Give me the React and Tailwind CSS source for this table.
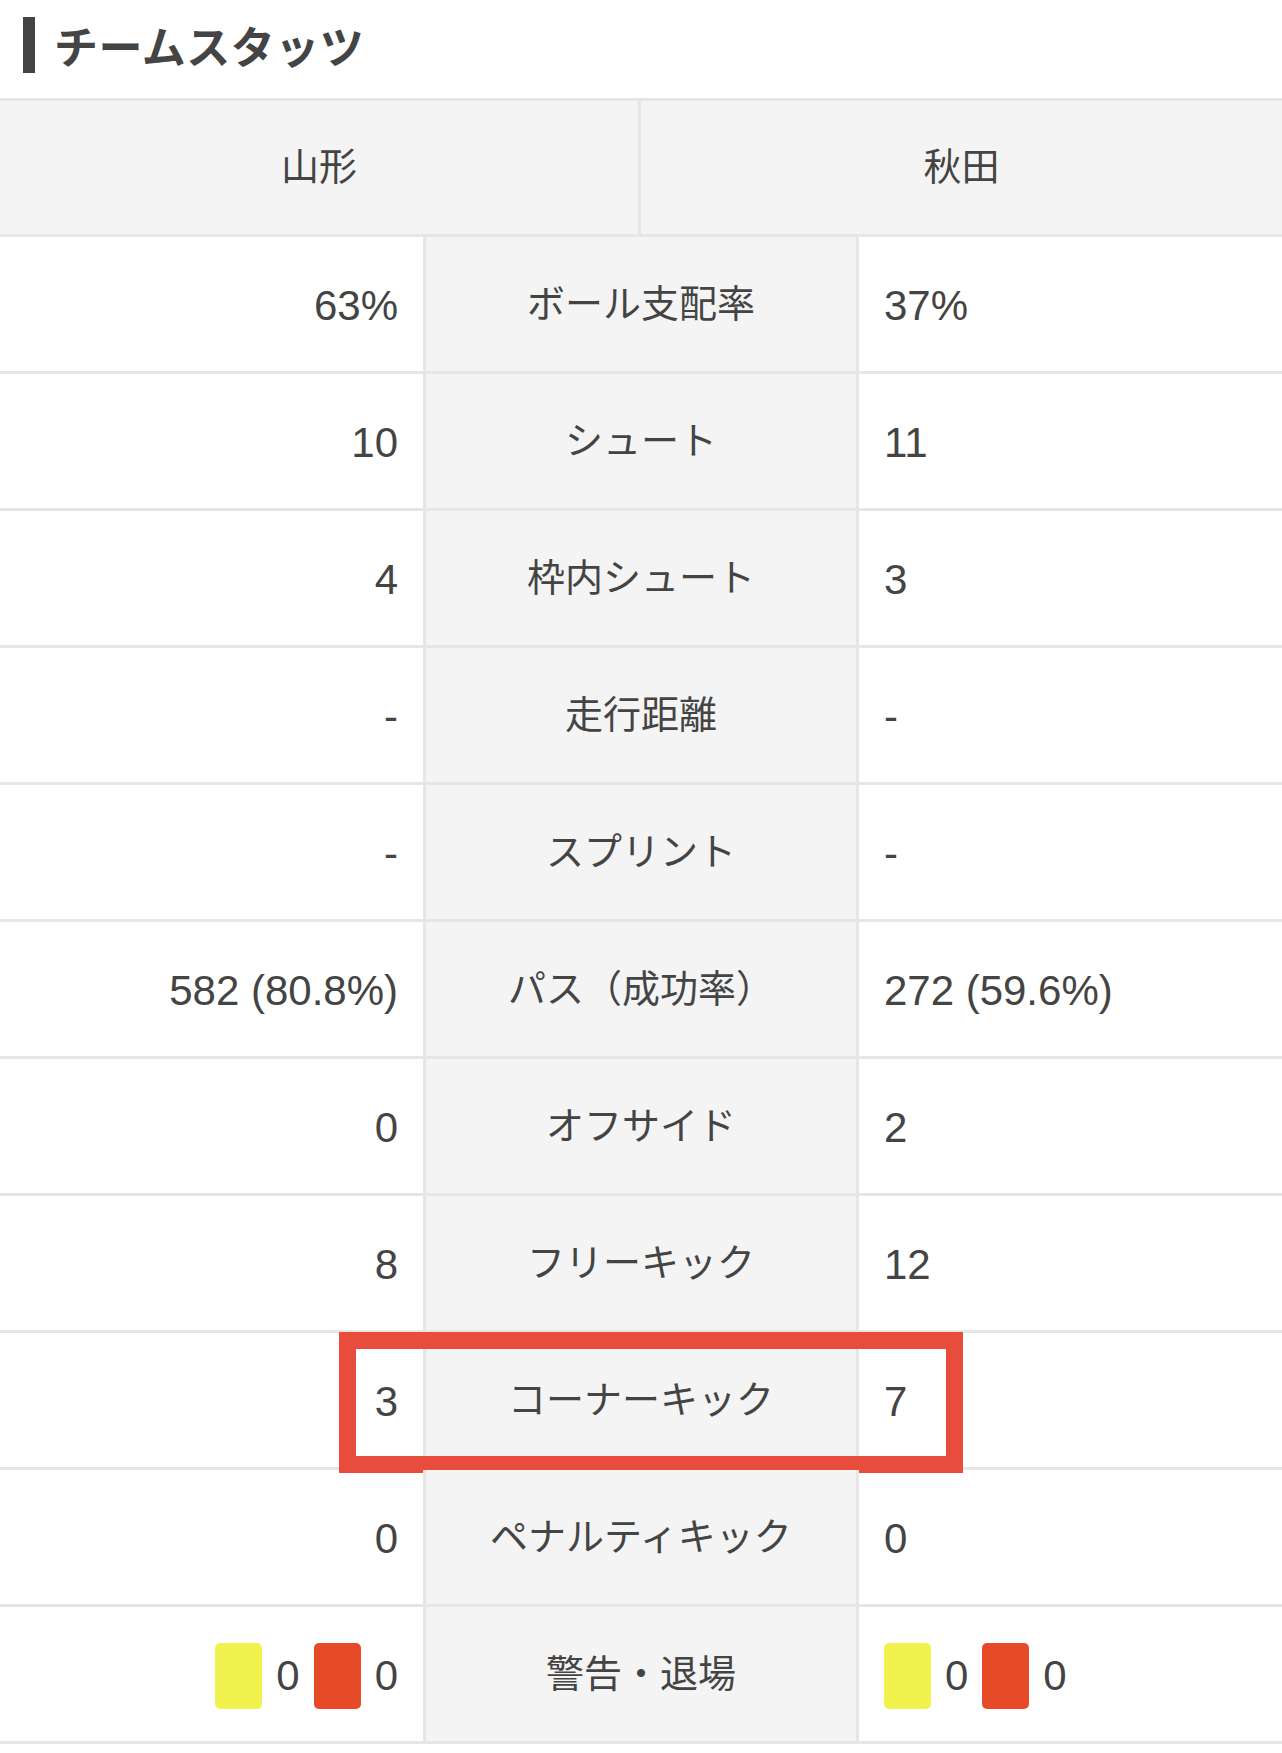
import React from 'react'

const rows = [
  { label: 'ボール支配率', home: '63%', away: '37%' },
  { label: 'シュート', home: '10', away: '11' },
  { label: '枠内シュート', home: '4', away: '3' },
  { label: '走行距離', home: '-', away: '-' },
  { label: 'スプリント', home: '-', away: '-' },
  { label: 'パス（成功率）', home: '582 (80.8%)', away: '272 (59.6%)' },
  { label: 'オフサイド', home: '0', away: '2' },
  { label: 'フリーキック', home: '8', away: '12' },
  { label: 'コーナーキック', home: '3', away: '7', marked: true },
  { label: 'ペナルティキック', home: '0', away: '0' },
  { label: '警告・退場', cards: { home: [0, 0], away: [0, 0] } },
]

function Cards({ yellow, red }) {
  return (
    <div className="flex items-center gap-[14px]">
      <span className="block w-[47px] h-[66px] rounded-[5px] bg-[#f2f24e]" />
      <span>{yellow}</span>
      <span className="block w-[47px] h-[66px] rounded-[5px] bg-[#e64a27]" />
      <span>{red}</span>
    </div>
  )
}

export default function App() {
  return (
    <div
      className="w-[1282px] min-h-[1753px] bg-white text-[#444]"
      style={{ fontFamily: '"Liberation Sans", "Noto Sans CJK JP", sans-serif' }}
    >
      <div className="h-[98px] flex items-start pt-[17px] pl-[23px]">
        <span className="block w-[12px] h-[56px] bg-[#444]" />
        <h2 className="ml-[19px] text-[44px] leading-[56px] font-bold tracking-[0.5px]" style={{ fontFamily: '"Noto Sans CJK JP", sans-serif' }}>
          チームスタッツ
        </h2>
      </div>

      <div className="flex h-[139px] border-y-[3px] border-[#e6e6e6] bg-[#f4f4f4] text-[38px]">
        <div className="w-1/2 flex items-center justify-center border-r-[3px] border-[#e6e6e6]">山形</div>
        <div className="flex-1 flex items-center justify-center">秋田</div>
      </div>

      {rows.map((r) => (
        <div key={r.label} className="relative flex h-[137px] border-b-[3px] border-[#e6e6e6]">
          <div className="w-[33%] flex items-center justify-end pr-[25px] pt-[3px] text-[42px]">
            {r.cards ? <Cards yellow={r.cards.home[0]} red={r.cards.home[1]} /> : r.home}
          </div>
          <div className="w-[34%] flex items-center justify-center bg-[#f4f4f4] border-x-[3px] border-[#e6e6e6] text-[38px]">
            {r.label}
          </div>
          <div className="flex-1 flex items-center pl-[25px] pt-[3px] text-[42px]">
            {r.cards ? <Cards yellow={r.cards.away[0]} red={r.cards.away[1]} /> : r.away}
          </div>
          {r.marked && (
            <div className="absolute left-[339px] top-[-1px] w-[624px] h-[141px] border-[17px] border-[#e74c3c]" />
          )}
        </div>
      ))}
    </div>
  )
}
